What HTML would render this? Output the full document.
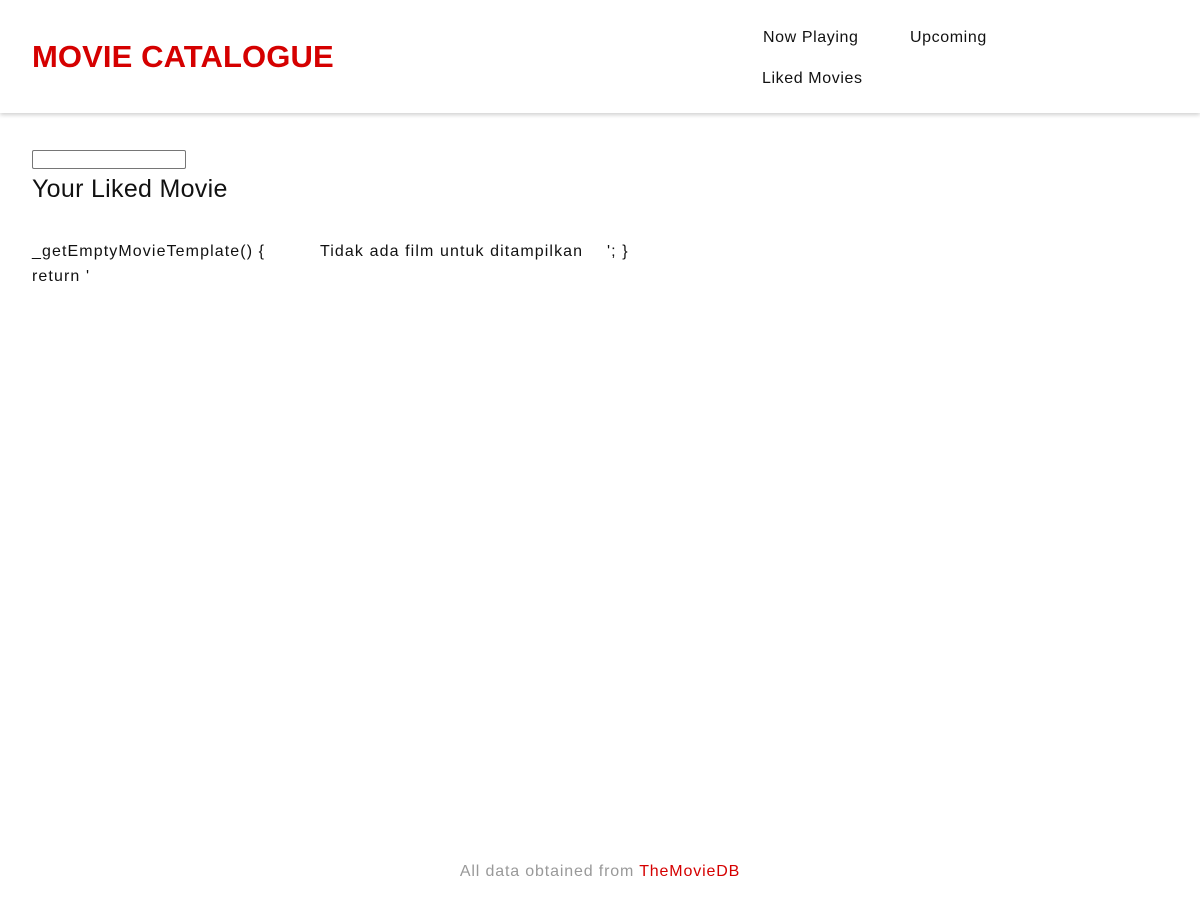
<!DOCTYPE html>
<html><head><meta charset="utf-8"><style>
body{margin:0;width:1200px;height:900px;background:#fff;font-family:"Liberation Sans",sans-serif;position:relative;overflow:hidden}
header{position:absolute;left:0;top:0;width:1200px;height:113px;background:#fff;box-shadow:0 2px 4px rgba(0,0,0,.18)}
.logo{position:absolute;left:32px;top:39px;font-size:31px;font-weight:bold;color:#d50000;letter-spacing:0.1px}
.nav{position:absolute;font-size:16px;color:#111;letter-spacing:0.6px}
.in{position:absolute;left:32px;top:150px;width:152px;height:17px;border:1px solid #767676;border-radius:2px}
h2{position:absolute;left:32px;top:175px;margin:0;font-size:25px;font-weight:normal;color:#111;letter-spacing:0.3px}
.t{position:absolute;font-size:16px;color:#111;letter-spacing:1.1px}
.f{position:absolute;top:863px;left:0;width:1200px;text-align:center;font-size:16px;color:#999;letter-spacing:0.85px}
.f span{color:#d50000}
</style></head><body>
<header>
<div class="logo">MOVIE CATALOGUE</div>
<div class="nav" style="left:763px;top:29px">Now Playing</div>
<div class="nav" style="left:910px;top:29px">Upcoming</div>
<div class="nav" style="left:762px;top:70px">Liked Movies</div>
</header>
<div class="in"></div>
<h2>Your Liked Movie</h2>
<div class="t" style="left:32px;top:243px">_getEmptyMovieTemplate() {</div>
<div class="t" style="left:320px;top:243px">Tidak ada film untuk ditampilkan</div>
<div class="t" style="left:607px;top:243px">'; }</div>
<div class="t" style="left:32px;top:268px">return '</div>
<div class="f">All data obtained from <span>TheMovieDB</span></div>
</body></html>
